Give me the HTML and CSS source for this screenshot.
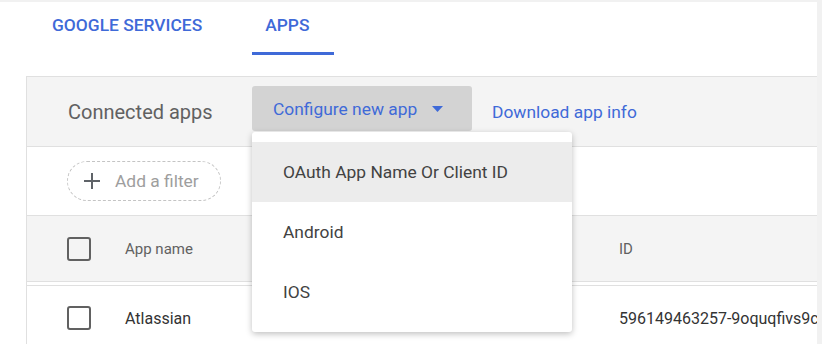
FILE: index.html
```html
<!DOCTYPE html>
<html lang="en">
<head>
    <title>Apps</title>
    <link rel="stylesheet" href="styles.css">
</head>
<body>

<div class="panel">
    <nav class="tabs">
        <a href="#" class="tab tab-services">GOOGLE SERVICES</a>
        <a href="#" class="tab tab-apps active">APPS</a>
    </nav>

    <div class="card">
        <div class="card-header">
            <span class="card-title">Connected apps</span>
            <div class="menu-wrap">
                <button class="btn-configure">
                    Configure new app
                    <svg class="caret" width="11" height="6" viewBox="0 0 11 6"><path d="M0 0h11L5.5 6z" fill="#3f6ad8"/></svg>
                </button>
                <!-- open dropdown -->
                <ul class="menu">
                    <li class="selected">OAuth App Name Or Client ID</li>
                    <li>Android</li>
                    <li>IOS</li>
                </ul>
            </div>
            <a href="#" class="link-download">Download app info</a>
        </div>

        <div class="filter-row">
            <div class="filter-chip">
                <svg width="18" height="18" viewBox="0 0 18 18"><path d="M8 1h2v7h7v2h-7v7H8v-7H1V8h7z" fill="#5f6368"/></svg>
                <span>Add a filter</span>
            </div>
        </div>

        <div class="table-head">
            <span class="checkbox"></span>
            <span class="col-name">App name</span>
            <span class="col-id">ID</span>
        </div>

        <div class="table-row">
            <span class="checkbox"></span>
            <span class="col-name">Atlassian</span>
            <span class="col-id">596149463257-9oquqfivs9c</span>
        </div>
    </div>
</div>

</body>
</html>
```

FILE: styles.css
```css
body {
    margin: 0;
    background-color: #f1f1f1;
    font-family: Roboto, Arial, sans-serif;
    overflow: hidden;
}
.panel {
    background-color: white;
    margin-top: 2px;
    width: 817px;
    height: 342px;
    overflow: hidden;
}
.tabs {
    display: flex;
    height: 53px;
}
.tab {
    font-size: 17.4px;
    font-weight: 500;
    color: #3f6ad8;
    text-decoration: none;
    line-height: 46px;
    height: 50px;
    box-sizing: border-box;
}
.tab-services {
    margin-left: 52px;
}
.tab-apps {
    margin-left: 50px;
    width: 82px;
    padding-left: 13px;
}
.tab.active {
    border-bottom: 3px solid #3f6ad8;
    height: 53px;
}
.card {
    margin-top: 21px;
    margin-left: 26px;
    border-left: 1px solid #e0e0e0;
    border-top: 1px solid #e0e0e0;
}
.card-header {
    display: flex;
    align-items: center;
    height: 69px;
    background-color: #f4f4f4;
    border-bottom: 1px solid #e0e0e0;
}
.card-title {
    font-size: 20px;
    color: #616161;
    margin-left: 41px;
    width: 184px;
}
.menu-wrap {
    position: relative;
    align-self: flex-start;
    margin-top: 9px;
}
.btn-configure {
    display: flex;
    align-items: center;
    width: 220px;
    height: 45px;
    padding: 0 0 0 21px;
    border: none;
    border-radius: 3px;
    background-color: #d3d3d3;
    color: #3f6ad8;
    font-family: Roboto, Arial, sans-serif;
    font-size: 17.4px;
    cursor: pointer;
}
.caret {
    margin-left: 15px;
}
.link-download {
    margin-left: 20px;
    font-size: 17.4px;
    color: #3f6ad8;
    text-decoration: none;
}
.menu {
    position: absolute;
    top: 46px;
    left: 0;
    width: 320px;
    margin: 0;
    padding: 10px 0;
    list-style-type: none;
    background-color: white;
    border-radius: 3px;
    box-shadow: 0 2px 6px rgba(0,0,0,0.25);
    z-index: 2;
}
.menu li {
    height: 60px;
    line-height: 60px;
    padding-left: 31px;
    font-size: 17.4px;
    color: #424242;
}
.menu li.selected {
    background-color: #ececec;
}
.filter-row {
    height: 68px;
    display: flex;
    align-items: center;
    border-bottom: 1px solid #e0e0e0;
}
.filter-chip {
    display: flex;
    align-items: center;
    margin-left: 40px;
    width: 154px;
    height: 40px;
    box-sizing: border-box;
    border: 1px dashed #c4c4c4;
    border-radius: 20px;
    padding-left: 15px;
    font-size: 17.4px;
    color: #9e9e9e;
}
.filter-chip span {
    margin-left: 14px;
}
.table-head {
    display: flex;
    align-items: center;
    height: 65px;
    background-color: #f4f4f4;
    border-bottom: 1px solid #e0e0e0;
    font-size: 15px;
    color: #616161;
}
.table-row {
    display: flex;
    align-items: center;
    height: 64px;
    margin-top: 3px;
    border-top: 1px solid #e0e0e0;
    font-size: 16px;
    color: #333;
    white-space: nowrap;
}
.checkbox {
    width: 24px;
    height: 24px;
    box-sizing: border-box;
    border: 2px solid #616161;
    border-radius: 3px;
    margin-left: 40px;
    flex-shrink: 0;
}
.col-name {
    margin-left: 34px;
    width: 494px;
    flex-shrink: 0;
}
.col-id {
    flex-shrink: 0;
}
```
